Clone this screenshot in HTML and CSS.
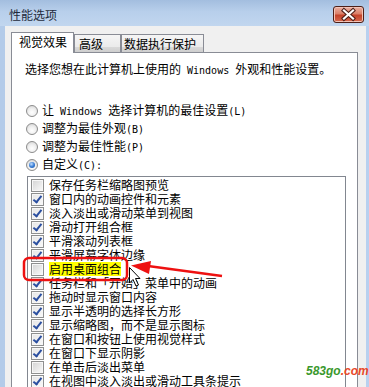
FILE: index.html
```html
<!doctype html>
<html lang="zh-CN">
  <head>
    <meta charset="utf-8">
    <title>性能选项</title>
    <link rel="stylesheet" href="styles.css">
  </head>
  <body>
    <div class="window">
      <div class="titlebar">
        <span class="title">性能选项</span>
        <button class="close" type="button">
          <svg width="29" height="15" viewBox="0 0 29 15">
            <path d="M10 3.5 L19 11.5 M19 3.5 L10 11.5" stroke="#4b1d16" stroke-width="4.2" stroke-linecap="square"/>
            <path d="M10 3.5 L19 11.5 M19 3.5 L10 11.5" stroke="#ffffff" stroke-width="2.2" stroke-linecap="square"/>
          </svg>
        </button>
      </div>

      <div class="dialog">
        <div class="tabs">
          <div class="tab tab_active">视觉效果</div>
          <div class="tab tab_adv">高级</div>
          <div class="tab tab_dep">数据执行保护</div>
        </div>

        <div class="page">
          <p class="intro">选择您想在此计算机上使用的<span class="en"> Windows </span>外观和性能设置。</p>

          <div class="radios">
            <div class="radio"><span class="dot"></span><span>让<span class="en"> Windows </span>选择计算机的最佳设置<span class="en">(L)</span></span></div>
            <div class="radio"><span class="dot"></span><span>调整为最佳外观<span class="en">(B)</span></span></div>
            <div class="radio"><span class="dot"></span><span>调整为最佳性能<span class="en">(P)</span></span></div>
            <div class="radio"><span class="dot dot_on"></span><span>自定义<span class="en">(C):</span></span></div>
          </div>

          <div class="list">
            <div class="item"><span class="box"></span>保存任务栏缩略图预览</div>
            <div class="item"><span class="box box_on"></span>窗口内的动画控件和元素</div>
            <div class="item"><span class="box box_on"></span>淡入淡出或滑动菜单到视图</div>
            <div class="item"><span class="box box_on"></span>滑动打开组合框</div>
            <div class="item"><span class="box box_on"></span>平滑滚动列表框</div>
            <div class="item"><span class="box box_on"></span>平滑屏幕字体边缘</div>
            <div class="item"><span class="box"></span><span class="hl">启用桌面组合</span></div>
            <div class="item"><span class="box box_on"></span>任务栏和「开始」菜单中的动画</div>
            <div class="item"><span class="box box_on"></span>拖动时显示窗口内容</div>
            <div class="item"><span class="box box_on"></span>显示半透明的选择长方形</div>
            <div class="item"><span class="box box_on"></span>显示缩略图，而不是显示图标</div>
            <div class="item"><span class="box box_on"></span>在窗口和按钮上使用视觉样式</div>
            <div class="item"><span class="box box_on"></span>在窗口下显示阴影</div>
            <div class="item"><span class="box"></span>在单击后淡出菜单</div>
            <div class="item"><span class="box box_on"></span>在视图中淡入淡出或滑动工具条提示</div>
            <div class="item"><span class="box box_on"></span>在鼠标指针下显示阴影</div>
          </div>
        </div>
      </div>

      <!-- annotation drawn over the screenshot -->
      <svg class="mark" width="369" height="387" viewBox="0 0 369 387">
        <rect x="24" y="258" width="103" height="22" rx="5" fill="none" stroke="#ee1111" stroke-width="2.5"/>
        <path d="M222 276 L148 266" stroke="#ee1111" stroke-width="2.5"/>
        <path d="M131 265.5 L151 261 L149 274 Z" fill="#ee1111"/>
        <path d="M129.5 267.5 V283 L133 279.5 L136 286 L138.5 285 L135.5 278.5 H140 Z" fill="#ffffff" stroke="#000000" stroke-width="1" stroke-linejoin="round"/>
      </svg>

      <div class="watermark"><span class="wm_green">583go</span><span class="wm_red">.com</span></div>
    </div>
  </body>
</html>
```

FILE: styles.css
```css
body{
  margin: 0;
  font-family: "Noto Sans CJK SC", sans-serif;
  font-size: 12px;
  color: #000;
}
.window{
  position: relative;
  width: 369px;
  height: 387px;
  overflow: hidden;
  display: flex;
  flex-direction: column;
  background: linear-gradient(90deg, #b3cbe9, #bcd3ef 50%, #b8d0ef);
}
/*--------------------------*/
.titlebar{
  height: 26px;
  flex: none;
  display: flex;
  align-items: flex-start;
  padding-left: 9px;
  background: linear-gradient(#a3bedf, #b8cfeb 45%, #c1d6ef);
}
.title{
  margin-top: 6px;
  line-height: 18px;
  color: #1f2b3b;
}
.close{
  margin: 6px 5px 0 auto;
  width: 31px;
  height: 17px;
  box-sizing: border-box;
  padding: 0;
  display: flex;
  border: 1px solid #4d1f17;
  border-radius: 3px;
  background: linear-gradient(#eab0a2, #db8069 45%, #c4432b 55%, #d66a4f);
  box-shadow: inset 0 0 0 1px #f3c4b8;
}
/*--------------------------*/
.dialog{
  flex: 1;
  min-height: 0;
  margin: 0 3px 0 5px;
  padding: 6px 8px 0 6px;
  display: flex;
  flex-direction: column;
  background: #f0f0f0;
}
.tabs{
  height: 20px;
  flex: none;
  display: flex;
  align-items: flex-end;
}
.tab{
  box-sizing: border-box;
  height: 18px;
  padding-left: 4px;
  line-height: 17px;
  white-space: nowrap;
  border: 1px solid #898c95;
  border-bottom: none;
  background: linear-gradient(#f5f5f5, #ebebeb 70%, #d9d9d9 72%, #cecece);
}
.tab_active{
  position: relative;
  z-index: 1;
  width: 63px;
  height: 21px;
  margin-bottom: -1px;
  padding-left: 7px;
  line-height: 18px;
  background: #fff;
}
.tab_adv{
  width: 47px;
}
.tab_dep{
  width: 83px;
  padding-left: 2px;
}
/*--------------------------*/
.page{
  flex: 1;
  min-height: 0;
  overflow: hidden;
  box-sizing: border-box;
  width: 347px;
  padding: 7px 0 0 13px;
  background: #fff;
  border: 1px solid #898c95;
  border-bottom: none;
}
.intro{
  margin: 0;
  line-height: 18px;
  white-space: nowrap;
}
.en{
  font-family: "DejaVu Sans Mono", monospace;
  font-size: 10px;
  white-space: pre;
}
.radios{
  margin-top: 22px;
}
.radio{
  height: 18px;
  line-height: 18px;
  display: flex;
  align-items: center;
  gap: 4px;
  padding-left: 1px;
  white-space: nowrap;
}
.dot{
  position: relative;
  width: 12px;
  height: 12px;
  flex: none;
  box-sizing: border-box;
  border: 1px solid #8c8c8c;
  border-radius: 50%;
  background: radial-gradient(circle at 50% 65%, #ffffff, #f0f0f0 45%, #cfcfcf);
}
.dot_on::after{
  content: "";
  position: absolute;
  left: 2px;
  top: 2px;
  width: 6px;
  height: 6px;
  border-radius: 50%;
  background: radial-gradient(circle at 40% 35%, #c3e0ff, #3b7fd6 50%, #1b4f9f);
}
/*--------------------------*/
.list{
  box-sizing: border-box;
  width: 319px;
  height: 330px;
  margin: 2px 0 0 2px;
  padding: 1px 0 0 3px;
  border: 1px solid #828790;
}
.item{
  height: 14px;
  line-height: 14px;
  display: flex;
  align-items: center;
  gap: 5px;
  white-space: nowrap;
}
.box{
  position: relative;
  width: 13px;
  height: 13px;
  flex: none;
  box-sizing: border-box;
  border: 1px solid #8e8f8f;
  background: linear-gradient(135deg, #d3d3d3, #efefef 70%, #f8f8f8);
  box-shadow: inset 0 0 0 1px #f7f7f7;
}
.box_on{
  background: linear-gradient(135deg, #e6e6e6, #f9f9f9);
}
.box_on::after{
  content: "";
  position: absolute;
  left: 3px;
  top: 0;
  width: 3px;
  height: 7px;
  border: solid #2b4fa0;
  border-width: 0 2px 2px 0;
  transform: rotate(38deg);
}
.hl{
  background: #ffff00;
}
/*--------------------------*/
.mark{
  position: absolute;
  top: 0;
  left: 0;
  pointer-events: none;
}
.watermark{
  position: absolute;
  left: 306px;
  top: 364px;
  font-family: "Liberation Sans", sans-serif;
  font-size: 12px;
  font-weight: bold;
  font-style: italic;
}
.wm_green{
  color: #3a982c;
}
.wm_red{
  color: #e8482a;
}
```
